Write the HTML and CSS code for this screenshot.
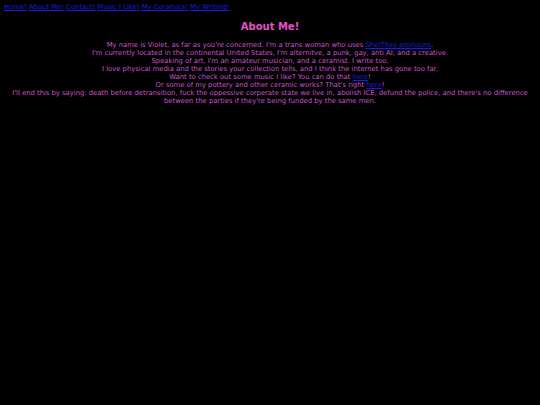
FILE: index.html
```html
<!DOCTYPE html>
<html>
<head>
<meta charset="utf-8">
<link rel="stylesheet" href="styles.css">
</head>
<body>
<nav class="nav">
<a href="#">Home!</a> <a href="#">About Me!</a> <a href="#">Contact!</a> <a href="#">Music I Like!</a> <a href="#">My Ceramics!</a> <a href="#">My Writing!</a>
</nav>
<h1 class="title">About Me!</h1>
<div class="about">
<p>My name is Violet, as far as you're concerned. I'm a trans woman who uses <a href="#">She/They pronouns</a>.</p>
<p>I'm currently located in the continental United States, I'm alternitve, a punk, gay, anti AI, and a creative.</p>
<p>Speaking of art, I'm an amateur musician, and a ceramist. I write too.</p>
<p>I love physical media and the stories your collection tells, and I think the internet has gone too far.</p>
<p>Want to check out some music I like? You can do that <a href="#">here</a>!</p>
<p>Or some of my pottery and other ceramic works? That's right <a href="#">here</a>!</p>
<p>I'll end this by saying: death before detransition, fuck the oppessive corperate state we live in, abolish ICE, defund the police, and there's no difference between the parties if they're being funded by the same men.</p>
</div>
</body>
</html>
```
FILE: styles.css
```css
html, body {
  background: #000;
}
body {
  margin: 0;
  padding: 3px 4px;
  font-family: "DejaVu Sans", Verdana, sans-serif;
  font-size: 6.8px;
  color: #cc55cc;
}
a {
  color: #1a1ae0;
  text-decoration: underline;
}
.nav {
  line-height: 8px;
}
.title {
  margin: 10px 0 8px;
  text-align: center;
  font-size: 10px;
  line-height: 12px;
  font-weight: bold;
  color: #e650c8;
}
.about {
  text-align: center;
  line-height: 8px;
}
.about p {
  margin: 0;
}
```
